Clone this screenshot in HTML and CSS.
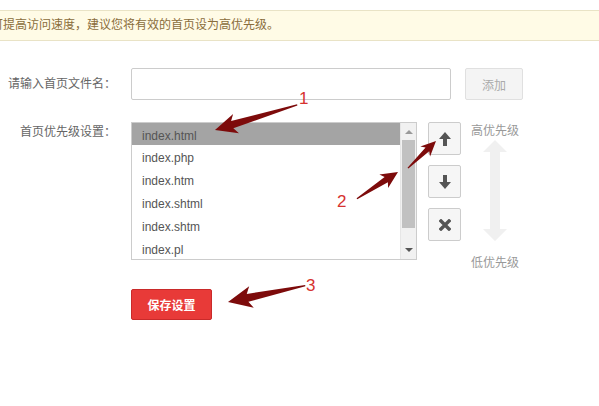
FILE: index.html
```html
<!DOCTYPE html>
<html lang="zh-CN">
<head>
    <meta charset="UTF-8">
    <title>默认首页设置</title>
    <link rel="stylesheet" href="styles.css">
</head>
<body>
    <div class="notice">可提高访问速度，建议您将有效的首页设为高优先级。</div>

    <div class="form">
        <div class="row">
            <label class="label" for="indexName">请输入首页文件名：</label>
            <input class="text-input" type="text" id="indexName">
            <button class="btn-add" type="button">添加</button>
        </div>

        <div class="row row-top">
            <span class="label">首页优先级设置：</span>
            <div class="list-box">
                <ul class="list">
                    <li class="selected">index.html</li>
                    <li>index.php</li>
                    <li>index.htm</li>
                    <li>index.shtml</li>
                    <li>index.shtm</li>
                    <li>index.pl</li>
                </ul>
                <div class="scrollbar">
                    <span class="scroll-up"></span>
                    <div class="scroll-track"><div class="scroll-thumb"></div></div>
                    <span class="scroll-down"></span>
                </div>
            </div>
            <div class="tools">
                <button class="btn-icon" type="button" title="上移">
                    <svg width="12" height="14" viewBox="0 0 12 14"><path d="M6 0 L12 7 H8 V14 H4 V7 H0 Z" fill="#555"/></svg>
                </button>
                <button class="btn-icon" type="button" title="下移">
                    <svg width="12" height="14" viewBox="0 0 12 14"><path d="M6 14 L12 7 H8 V0 H4 V7 H0 Z" fill="#555"/></svg>
                </button>
                <button class="btn-icon" type="button" title="删除">
                    <svg width="12" height="12" viewBox="0 0 12 12"><path d="M2 2 L10 10 M10 2 L2 10" stroke="#555" stroke-width="3.4" stroke-linecap="square"/></svg>
                </button>
            </div>
            <div class="priority">
                <span>高优先级</span>
                <svg class="priority-arrow" width="26" height="114" viewBox="0 0 26 114">
                    <path d="M13 0 L25 12 H18 V89 H25 L13 101 L1 89 H8 V12 H1 Z" fill="#f0f0f0"/>
                </svg>
                <span>低优先级</span>
            </div>
        </div>

        <div class="row actions">
            <button class="btn-save" type="button">保存设置</button>
        </div>
    </div>

    <!-- step markers drawn over the form -->
    <svg class="marks" width="599" height="406" viewBox="0 0 599 406">
        <g fill="#7d0b0b">
            <polygon transform="translate(215,130) rotate(163)" points="-86,-0.6 -18,-3.8 -22,-10 0,0 -22,10 -18,3.8 -86,0.6"/>
            <polygon transform="translate(398,172) rotate(-33)" points="-49,-0.6 -14,-3 -17,-8 0,0 -17,8 -14,3 -49,0.6"/>
            <polygon transform="translate(436,141) rotate(-44)" points="-39,-0.6 -12,-2.6 -15,-7 0,0 -15,7 -12,2.6 -39,0.6"/>
            <polygon transform="translate(228,302) rotate(168)" points="-79,-0.6 -20,-4 -24,-11 0,0 -24,11 -20,4 -79,0.6"/>
        </g>
        <g class="mark-num">
            <text x="299" y="104">1</text>
            <text x="337" y="207">2</text>
            <text x="306" y="291">3</text>
        </g>
    </svg>
</body>
</html>
```

FILE: styles.css
```css
body {
    margin: 0;
    position: relative;
    background-color: #fff;
    font-family: "Liberation Sans", "Noto Sans CJK SC", sans-serif;
    font-size: 12px;
    color: #555;
    overflow: hidden;
}
.notice {
    margin-top: 10px;
    height: 29px;
    line-height: 29px;
    text-indent: -9px;
    white-space: nowrap;
    background-color: #fffbe6;
    border-top: 1px solid #e9e3c6;
    border-bottom: 1px solid #e9e3c6;
    color: #8a6d3b;
}
.form {
    margin-top: 27px;
}
.row {
    display: flex;
    align-items: center;
}
.row-top {
    align-items: flex-start;
    height: 138px;
    margin-top: 22px;
}
.label {
    width: 116px;
    margin-right: 15px;
    text-align: right;
    color: #666;
    line-height: 20px;
    flex-shrink: 0;
}
.text-input {
    box-sizing: border-box;
    width: 320px;
    height: 32px;
    margin: 0;
    border: 1px solid #ccc;
    border-radius: 2px;
}
.btn-add {
    box-sizing: border-box;
    width: 58px;
    height: 32px;
    margin-left: 14px;
    border: 1px solid #e0e0e0;
    border-radius: 2px;
    background-color: #f4f4f4;
    color: #aaa;
    font-family: inherit;
    font-size: 12px;
}
.list-box {
    box-sizing: border-box;
    width: 286px;
    height: 138px;
    border: 1px solid #ccc;
    display: flex;
}
.list {
    flex: 1;
    margin: 0;
    padding: 0;
    list-style: none;
}
.list li {
    box-sizing: border-box;
    height: 23px;
    line-height: 22px;
    padding: 2px 0 0 10px;
}
.list li.selected {
    background-color: #a4a4a4;
    height: 22px;
}
.scrollbar {
    width: 15px;
    display: flex;
    flex-direction: column;
    background-color: #f1f1f1;
    border-left: 1px solid #e6e6e6;
}
.scroll-up,
.scroll-down {
    height: 17px;
    position: relative;
}
.scroll-up::after,
.scroll-down::after {
    content: "";
    position: absolute;
    left: 4px;
    top: 7px;
    border-left: 4px solid transparent;
    border-right: 4px solid transparent;
}
.scroll-up::after {
    border-bottom: 4px solid #999;
}
.scroll-down::after {
    top: 6px;
    border-top: 4px solid #555;
}
.scroll-track {
    flex: 1;
}
.scroll-thumb {
    height: 88px;
    margin: 0 1px;
    background-color: #c1c1c1;
}
.tools {
    display: flex;
    flex-direction: column;
    gap: 10px;
    margin-left: 11px;
}
.btn-icon {
    box-sizing: border-box;
    width: 33px;
    height: 33px;
    padding: 0;
    border: 1px solid #ccc;
    border-radius: 2px;
    background-color: #f6f6f6;
    display: flex;
    align-items: center;
    justify-content: center;
}
.priority {
    display: flex;
    flex-direction: column;
    align-items: center;
    margin-left: 10px;
    color: #999;
    line-height: 18px;
}
.priority-arrow {
    display: block;
}
.actions {
    margin-top: 29px;
    padding-left: 131px;
}
.btn-save {
    box-sizing: border-box;
    width: 81px;
    height: 31px;
    border: 1px solid #c92a2a;
    border-radius: 2px;
    background-color: #e83a38;
    color: #fff;
    font-family: inherit;
    font-size: 12px;
    font-weight: bold;
}
.marks {
    position: absolute;
    left: 0;
    top: 0;
    pointer-events: none;
}
.mark-num {
    fill: #d6322f;
    font-family: "Liberation Sans", sans-serif;
    font-size: 17px;
}
```
